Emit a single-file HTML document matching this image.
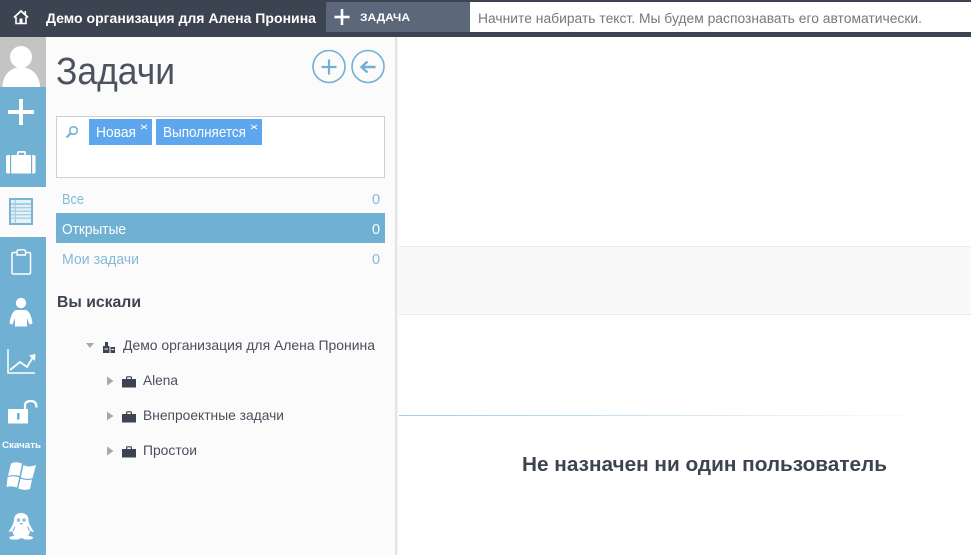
<!DOCTYPE html>
<html lang="ru">
<head>
<meta charset="utf-8">
<title>Задачи</title>
<style>
html,body{margin:0;padding:0;width:971px;height:555px;overflow:hidden;background:#fff}
svg{display:block}
text{font-family:"Liberation Sans",sans-serif}
</style>
</head>
<body>
<svg width="971" height="555" viewBox="0 0 971 555" xmlns="http://www.w3.org/2000/svg">
<defs>
<linearGradient id="sh" x1="0" x2="1" y1="0" y2="0">
<stop offset="0" stop-color="#dcdcdc"/><stop offset="1" stop-color="#ffffff"/>
</linearGradient>
<linearGradient id="ln" x1="0" x2="1" y1="0" y2="0">
<stop offset="0" stop-color="#a0cce4"/><stop offset="1" stop-color="#ffffff"/>
</linearGradient>
</defs>

<!-- content area -->
<rect x="396" y="246" width="575" height="69" fill="#f9f9f9"/>
<rect x="396" y="246" width="575" height="1" fill="#e8eaec"/>
<rect x="396" y="314" width="575" height="1" fill="#e8eaec"/>
<rect x="396" y="415" width="540" height="1" fill="url(#ln)"/>
<text x="522" y="471" font-size="20" font-weight="700" fill="#3d4451" textLength="365" lengthAdjust="spacingAndGlyphs">Не назначен ни один пользователь</text>

<!-- header -->
<rect x="0" y="0" width="971" height="37" fill="#3d4451"/>
<path d="M14 17.5 L21 11 L28 17.5" fill="none" stroke="#fff" stroke-width="1.8"/>
<path d="M16 17 V23.5 H26 V17" fill="none" stroke="#fff" stroke-width="1.6"/>
<rect x="19.5" y="18.5" width="3" height="5" fill="#fff"/>
<rect x="24.5" y="11" width="1.6" height="3.5" fill="#fff"/>
<text x="46" y="23" font-size="14" font-weight="700" fill="#fff" textLength="270" lengthAdjust="spacingAndGlyphs">Демо организация для Алена Пронина</text>
<rect x="326" y="2" width="144" height="30" fill="#5c6879"/>
<rect x="334.5" y="15.7" width="15" height="2.6" fill="#fff"/>
<rect x="340.7" y="9" width="2.6" height="16" fill="#fff"/>
<text x="360" y="21" font-size="11" font-weight="700" fill="#fff" textLength="50" lengthAdjust="spacingAndGlyphs">ЗАДАЧА</text>
<rect x="470" y="2" width="501" height="30" fill="#fff"/>
<text x="478" y="23" font-size="13.5" fill="#777" textLength="444" lengthAdjust="spacingAndGlyphs">Начните набирать текст. Мы будем распознавать его автоматически.</text>

<!-- panel -->
<rect x="46" y="37" width="349" height="518" fill="#fbfbfb"/>
<rect x="395" y="37" width="4" height="518" fill="url(#sh)"/>

<text x="56" y="84" font-size="38" fill="#4c5260" textLength="119" lengthAdjust="spacingAndGlyphs">Задачи</text>

<g fill="none" stroke="#6fb0d3" stroke-width="1.6">
<circle cx="329" cy="66.5" r="16"/>
<circle cx="368" cy="66.5" r="16"/>
</g>
<path d="M329 59.5 V74.5 M321.5 67 H336.5" stroke="#6fb0d3" stroke-width="2.2" fill="none"/>
<path d="M375.5 67 H362 M367.5 61.5 L361.5 67 L367.5 72.5" stroke="#6fb0d3" stroke-width="2.4" fill="none"/>

<!-- filter box -->
<rect x="56.5" y="116.5" width="328" height="61" fill="#fff" stroke="#cfcfcf"/>
<circle cx="73.5" cy="130.5" r="3.8" fill="none" stroke="#6fb0d3" stroke-width="1.5"/>
<path d="M70.5 133.5 L66.5 137.5" stroke="#6fb0d3" stroke-width="2"/>
<rect x="89" y="119" width="63" height="26" fill="#5ea7ee"/>
<rect x="156" y="119" width="106" height="26" fill="#5ea7ee"/>
<text x="96" y="137" font-size="14.5" fill="#fff" textLength="40" lengthAdjust="spacingAndGlyphs">Новая</text>
<text x="163" y="137" font-size="14.5" fill="#fff" textLength="83" lengthAdjust="spacingAndGlyphs">Выполняется</text>
<path d="M141 125 L147 129 M147 125 L141 129 M251 125 L257 129 M257 125 L251 129" stroke="#fff" stroke-width="1"/>

<!-- list -->
<rect x="56" y="213" width="329" height="30" fill="#6fb0d3"/>
<text x="62" y="204" font-size="15" fill="#85bbd9" textLength="22" lengthAdjust="spacingAndGlyphs">Все</text>
<text x="372" y="204" font-size="14.5" fill="#85bbd9">0</text>
<text x="62" y="234" font-size="15" fill="#fff" textLength="64" lengthAdjust="spacingAndGlyphs">Открытые</text>
<text x="372" y="234" font-size="14.5" fill="#fff">0</text>
<text x="62" y="264" font-size="15" fill="#85bbd9" textLength="77" lengthAdjust="spacingAndGlyphs">Мои задачи</text>
<text x="372" y="264" font-size="14.5" fill="#85bbd9">0</text>

<text x="57" y="307" font-size="15.5" font-weight="700" fill="#3d4451" textLength="84" lengthAdjust="spacingAndGlyphs">Вы искали</text>

<!-- tree -->
<path d="M86 343 H94 L90 348 Z" fill="#aaa"/>
<path d="M103 353 V346 H105 V342 H108 V346 H109.5 V353 Z M110.5 347 H115 V353 H110.5 Z" fill="#3d4451"/>
<rect x="104.5" y="348.5" width="3.5" height="1" fill="#fbfbfb"/>
<rect x="111.5" y="349" width="2.5" height="1" fill="#fbfbfb"/>
<text x="123" y="350" font-size="14" fill="#4a4f5c" textLength="252" lengthAdjust="spacingAndGlyphs">Демо организация для Алена Пронина</text>

<g fill="#aaa">
<path d="M107 376.5 L113.5 381 L107 385.5 Z"/>
<path d="M107 411.5 L113.5 416 L107 420.5 Z"/>
<path d="M107 446.5 L113.5 451 L107 455.5 Z"/>
</g>
<g fill="#3d4451">
<path d="M122 379 H126 V377.5 Q126 376.3 127.5 376.3 H130.5 Q132 376.3 132 377.5 V379 H136 V387.5 H122 Z M127.2 379 H130.8 V377.4 H127.2 Z" fill-rule="evenodd"/>
<path d="M122 414 H126 V412.5 Q126 411.3 127.5 411.3 H130.5 Q132 411.3 132 412.5 V414 H136 V422.5 H122 Z M127.2 414 H130.8 V412.4 H127.2 Z" fill-rule="evenodd"/>
<path d="M122 449 H126 V447.5 Q126 446.3 127.5 446.3 H130.5 Q132 446.3 132 447.5 V449 H136 V457.5 H122 Z M127.2 449 H130.8 V447.4 H127.2 Z" fill-rule="evenodd"/>
</g>
<text x="143" y="385" font-size="14" fill="#4a4f5c" textLength="35" lengthAdjust="spacingAndGlyphs">Alena</text>
<text x="143" y="420" font-size="14" fill="#4a4f5c" textLength="141" lengthAdjust="spacingAndGlyphs">Внепроектные задачи</text>
<text x="143" y="455" font-size="14" fill="#4a4f5c" textLength="54" lengthAdjust="spacingAndGlyphs">Простои</text>

<!-- rail -->
<rect x="0" y="37" width="46" height="50" fill="#c4c4c4"/>
<rect x="0" y="87" width="46" height="100" fill="#6fb0d3"/>
<rect x="0" y="187" width="46" height="50" fill="#fbfbfb"/>
<rect x="0" y="237" width="46" height="318" fill="#6fb0d3"/>

<!-- avatar -->
<circle cx="21" cy="57" r="11" fill="#fff"/>
<path d="M2.5 87 C2.5 75 11 67 21 67 C31 67 40 75 40 87 Z" fill="#fff"/>

<!-- plus -->
<rect x="8" y="110" width="26" height="4" fill="#fff"/>
<rect x="19" y="99" width="4" height="26" fill="#fff"/>

<!-- briefcase -->
<path d="M8 155 H17 V153 Q17 151 19 151 H24 Q26 151 26 153 V155 H33.5 Q35.5 155 35.5 157 V171.5 Q35.5 173.5 33.5 173.5 H8 Q6 173.5 6 171.5 V157 Q6 155 8 155 Z M18.7 155 H24.3 V152.8 H18.7 Z" fill="#fff" fill-rule="evenodd"/>
<rect x="10" y="155" width="1.2" height="19" fill="#6fb0d3"/>
<rect x="31" y="155" width="1.2" height="19" fill="#6fb0d3"/>

<!-- table (active) -->
<rect x="10" y="199" width="22" height="25" fill="#e6f1f7" stroke="#7ab5d6" stroke-width="2"/>
<g fill="#a8cfe4">
<rect x="11" y="203" width="20" height="2"/>
<rect x="11" y="207" width="20" height="1.4"/>
<rect x="11" y="210.5" width="20" height="1.4"/>
<rect x="11" y="214" width="20" height="1.4"/>
<rect x="11" y="217.5" width="20" height="1.4"/>
<rect x="14.5" y="200" width="1.4" height="23"/>
</g>

<!-- clipboard -->
<path d="M17 252.5 H13.5 Q12 252.5 12 254 V272.5 Q12 274 13.5 274 H29 Q30.5 274 30.5 272.5 V254 Q30.5 252.5 29 252.5 H25.5" fill="none" stroke="#fff" stroke-width="1.5"/>
<path d="M17 255 V251.5 Q17 249.8 19 249.8 H23.5 Q25.5 249.8 25.5 251.5 V255 Z" fill="none" stroke="#fff" stroke-width="1.4"/>

<!-- person -->
<circle cx="21" cy="303" r="5.2" fill="#fff"/>
<path d="M16 310 H26 Q31 312 32.5 323.5 L29.5 324.5 L27 318 V326.5 H15 V318 L12.5 324.5 L9.5 323.5 Q11 312 16 310 Z" fill="#fff"/>

<!-- chart -->
<path d="M8 349 V373 H35" fill="none" stroke="#fff" stroke-width="1.5"/>
<path d="M10 370 L20 362 L27 367 L33 357" fill="none" stroke="#fff" stroke-width="1.8"/>
<path d="M29 355.5 L35.5 354 L35 361 Z" fill="#fff"/>

<!-- lock -->
<rect x="8" y="409" width="20" height="14.5" fill="#fff"/>
<rect x="17" y="413" width="2.6" height="6.5" fill="#6fb0d3"/>
<path d="M25 409 V405.5 Q25 401 31 401 Q36.5 401 36.5 407.5" fill="none" stroke="#fff" stroke-width="2.2"/>

<text x="2" y="448" font-size="9.5" font-weight="700" fill="#fff" textLength="39" lengthAdjust="spacingAndGlyphs">Скачать</text>

<!-- windows -->
<g fill="#fff">
<path d="M11 463.5 Q16 461 22 463.5 L19.5 476 Q13.5 474 8 476 Z"/>
<path d="M23.5 465 Q29 468 36 465 L32.5 478 Q26.5 480 20.8 477.2 Z"/>
<path d="M7.6 477.2 Q13 475.3 19.2 477.4 L17 487.5 Q11.5 485.5 6.5 487 Z"/>
<path d="M20.5 478.6 Q26 481 32 479.5 L30 489 Q24 491 18.3 488.5 Z"/>
</g>

<!-- penguin -->
<path d="M21 513 Q28 513 28.5 520 Q29 524 31 527 L34 532 L30 531 Q30 534 28 535.5 L33 537 Q33 539.5 30 539.5 H25 L21.5 538 L18 539.5 H12 Q9 539.5 9.5 537 L14.5 535.5 Q12.5 534 12.5 531 L8.5 532 L11.5 527 Q13.5 524 14 520 Q14.5 513 21 513 Z" fill="#fff"/>
<circle cx="18.5" cy="520" r="1.8" fill="#8fc0dc"/>
<circle cx="24" cy="520" r="1.8" fill="#8fc0dc"/>
<path d="M19.5 523 H23 L21.3 525 Z" fill="#6fb0d3"/>
<path d="M15 526.5 L13 531 M27.5 526.5 L29.5 531" stroke="#6fb0d3" stroke-width="1" fill="none"/>
</svg>
</body>
</html>
